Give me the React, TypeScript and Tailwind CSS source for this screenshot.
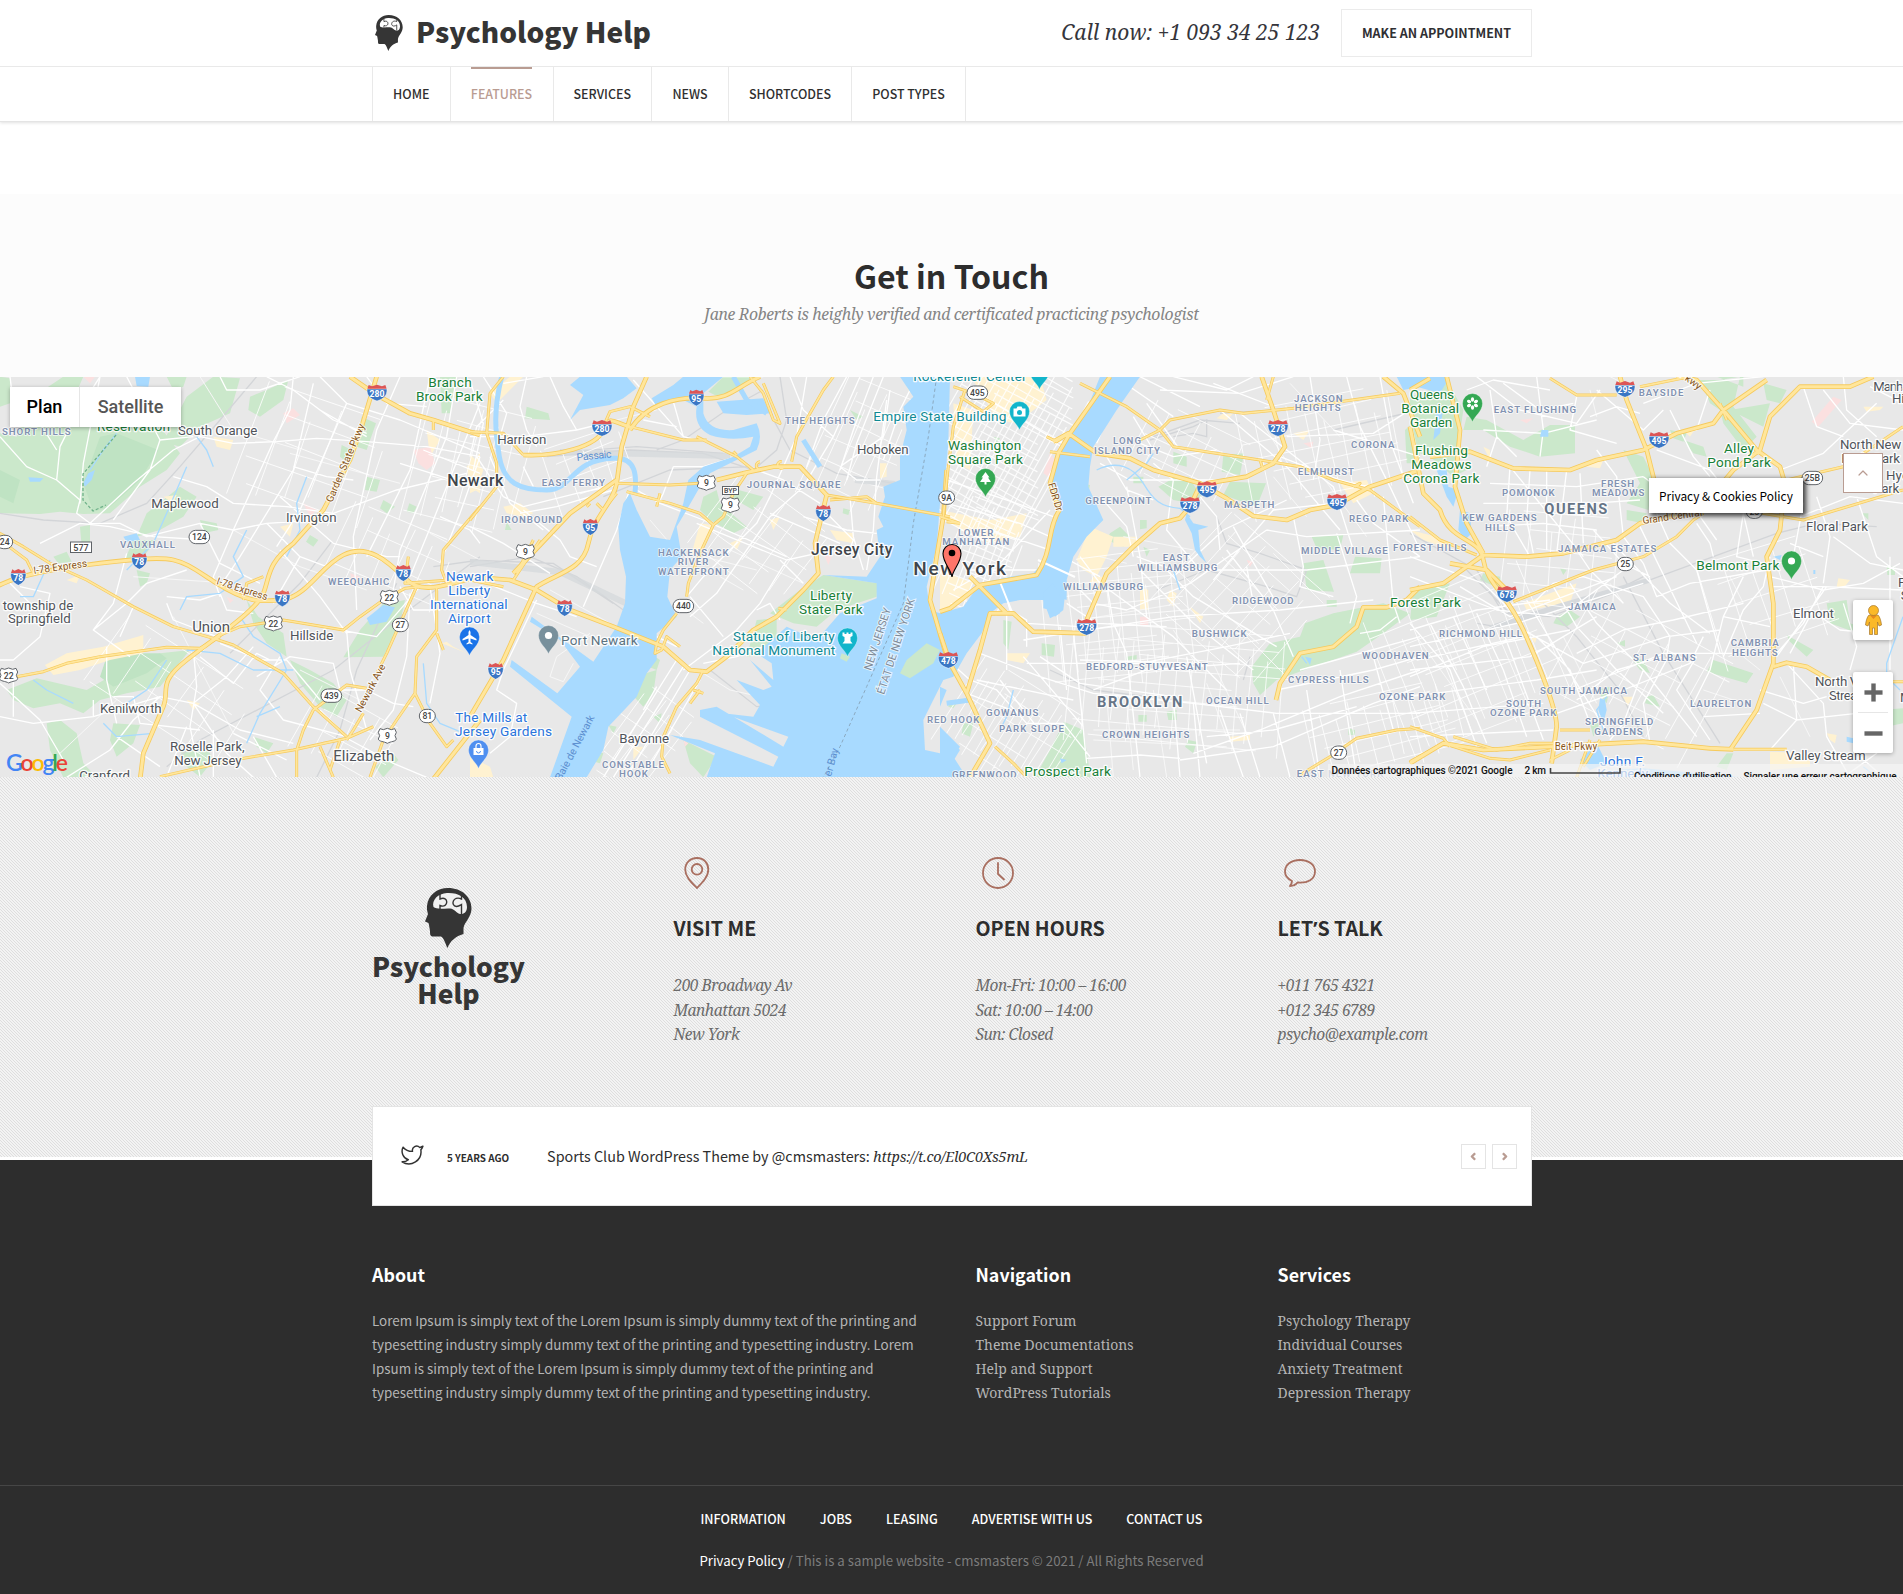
import React from "react";
import { ChevronLeft, ChevronRight, ChevronUp, Minus, Plus, Twitter } from "lucide-react";

const SANS = "font-['Noto_Sans_CJK_SC',sans-serif]";
const SERIF = "font-['Noto_Serif',serif]";

function Head({ className, brain }: { className: string; brain: string }) {
  return (
    <svg viewBox="0 0 47 60" preserveAspectRatio="none" className={className}>
      <path
        fill="#353535"
        d="M23 0C37 0 46.5 9 46.5 20.5C46.5 29 39.5 34 38.5 40V46C31 48 25 53 22.5 60C20 55 19 50 16 48.5H7C5 48 5 46 5 43L4 37L3.500 35L0 33.500L3 26C2 23 1.800 20 2 18C3 7 12 0 23 0Z"
      />
      <path className={brain} d="M8.500 19C6.500 12 13 5.500 22 5C33 4.500 42 9 42 19C42 24 39 26.500 35 26C31 25 30 21 25 20.500C20 20 12 22 8.500 19Z" />
      <path fill="none" stroke="#353535" strokeWidth="1.400" d="M15 6V11C24 7 24 21 15 17.500V21M36.500 7.500V11C28 7 25 18 31.500 18.500C34 18.500 35 17.500 36.500 16.500V26" />
    </svg>
  );
}

/* ---------- Map data: four tiles, each in its own triple-scale space ---------- */

type Pt = [number, number];
type Label = [string, number, number, number];
type Tile = {
  x: number;
  park: string;
  deep?: string;
  urban: string;
  rose?: string;
  minor: string;
  thin?: string;
  rail?: string;
  water: string;
  stream?: string;
  mid: string;
  major: string;
  area: Label[];
  town: Label[];
  green?: Label[];
  teal?: Label[];
  blue?: Label[];
  inter: [string, number, number][];
  route: [string, number, number][];
  us?: [string, number, number][];
};

const TILES: Tile[] = [
  {
    x: 0,
    park: "M0 190L50 200L100 80L190 20H250L210 110L300 60L400 130L480 170L540 250L500 300L420 350L330 430L250 432L180 425L120 432L0 430ZM560 80L640 20L720 25L690 130L600 170L540 230L490 215ZM750 80L800 60L865 30L850 90L780 140L745 120ZM0 20L30 25L30 100L0 110ZM500 20H560L550 50L520 60ZM20 960L110 925L260 960L380 890L480 850L570 840L480 950L380 970L300 990L250 1030L180 1000L100 1015L40 990ZM140 1060L180 1050L230 1090L250 1180L290 1222H190L150 1140ZM340 1060L420 1065L400 1120L350 1160L330 1110ZM1170 700L1215 690L1200 760L1150 860L1030 862L1080 780L1150 700ZM740 690L775 740L850 790L860 860L800 820L760 760ZM870 870L930 900L1000 940L1040 990L1010 1040L960 1010L900 940ZM1100 320L1140 330L1130 365L1095 360ZM1150 390L1185 410L1160 430L1140 415ZM1228 400L1250 410L1240 430L1220 425ZM1085 140L1128 160L1100 240L1070 230ZM440 430L540 350L590 380L550 440L480 480L410 500ZM600 450L650 460L655 480L610 490ZM930 495L955 510L940 530L918 515ZM1025 225L1055 240L1040 275L1020 260ZM410 600L450 610L440 640L420 650ZM540 1140L620 1130L640 1170L600 1220L560 1190ZM760 1100L820 1120L800 1150L770 1130ZM1320 20L1370 20L1350 130L1325 130ZM240 470L270 465L270 530L245 530ZM400 510L470 510L430 560L370 580ZM160 560L200 545L215 575L175 580ZM1125 1190L1180 1150L1195 1170L1150 1222Z",
    deep: "M250 340L300 200L350 190L475 240L420 330L330 410L280 425ZM320 860L420 850L480 850L500 865L440 910L340 950L300 920ZM0 300L60 330L40 400L0 380Z",
    urban: "M135 885L200 850L310 830L430 795V850L330 870L240 900L160 915ZM200 630L240 615L230 640ZM840 470L880 460L870 500ZM1400 290L1440 250V370L1410 350ZM1280 180L1320 210L1290 260ZM640 200L700 210L690 240L650 230ZM490 380L530 375L520 400ZM1000 770L1040 770L1030 790ZM560 990L600 1000L580 1020ZM1400 850L1325 820L1340 815L1360 830Z",
    rose: "M850 130L880 115L900 135L860 160ZM1240 240L1290 230L1305 280L1280 300L1255 280ZM250 20H285L270 40ZM910 400L950 420L930 440ZM1050 610L1080 620L1060 640ZM680 680L700 690L690 700Z",
    minor:
      "M30 20L40 100L120 160L170 240M0 200L80 290L170 330L180 230L230 130L300 20M170 330L240 390L230 430L270 460L360 460L440 500L600 460L700 480L800 460L960 450M300 20L250 280L240 400M120 520L240 460L330 470L460 500L620 510M270 460L400 340L520 240L600 200L700 220L830 215L950 205L1100 215L1280 230L1440 260M380 20L480 210L580 200M480 210L450 300L340 450M520 320L620 350L700 400L860 410L1000 430L1190 360L1400 310M660 20L680 60L780 60L900 20M880 20L870 120L820 215L700 480L640 620L660 680M800 20L880 60L1000 150L1100 190M960 20L1040 100L1200 150L1440 250M940 40L880 300L720 560L660 650M1040 100L900 420L830 530M1200 20L1130 180L1060 500L1070 720M1290 20L1230 300L1100 560M1370 20L1340 200L1200 540L1180 660M1440 100L1300 450L1230 620M1440 260L1380 430L1320 580M880 290L980 320L1060 330M800 460L900 560L980 590M840 380L1000 520L1160 560L1200 560M600 460L660 580L780 640M1320 440L1410 480L1440 520M0 490L90 540M60 650L150 670L120 800L40 870L0 870M30 640L90 700M380 550L340 700L280 780L390 860M400 710L360 800M320 830V930L350 1060M280 780L380 700L440 640L560 600M500 680L600 690L660 670L680 720L760 730M500 700L520 750L650 800L600 850M580 840L590 950L570 1070L600 1220M600 860L700 940L770 850L810 870M770 920L870 860L1000 880L1020 960L1100 960L1180 1000L1240 1010M660 820L780 870L860 870L960 990M0 1040L100 1060L280 1040L480 980L580 1000L720 1080L880 1120M580 1000L680 920L760 830M480 980L400 1050L330 1140L200 1222M580 1000L680 1150L760 1222M340 980H400L420 1060L600 1080M280 990V1040M350 1100L480 1190M560 1070L500 1220M640 1080V1222M960 1020L1050 1110L1180 1180L1280 1222M1040 780L1050 900L1100 1080M840 860L780 960L850 1050L1040 1100M1200 650L1240 720H1320M1230 670L1220 860L1180 1020L1110 1110M1260 650L1130 800L1020 780M1290 650L1320 850L1290 1000M760 1100L830 1222M700 1090L860 1170M40 920V1040M0 940L120 1050L190 1170M1270 240L1440 310M840 540L960 680L1040 790M900 560L820 700M1100 20L1160 100L1280 110M960 120L1100 200M1200 280L1420 350",
    thin: "M600 20L700 180L900 240M700 480L900 590L1100 660M400 620L700 640M520 740L700 1090M180 1150L350 990M870 250L1200 340M1290 490L1440 570M900 900L1100 1000",
    rail: "M770 20L660 150L540 290L440 400L300 460L130 450L0 430M1440 560L1200 740L1000 900L600 1110L500 1190M1300 590L1440 570M1190 640L1070 900L1020 1080L950 1222M995 515L900 640L690 850",
    water: "M1100 745L1150 705L1185 712L1160 755L1110 765ZM85 322L130 325L120 335L90 335ZM405 20H450L445 50L410 48ZM370 500L410 490L420 510L380 515ZM265 310L285 300L275 330L255 350L250 340Z",
    stream: "M560 290L500 430L460 520L380 600M920 320L890 400L900 480L860 560M740 480L700 560L730 620L660 670L560 680L540 720M350 190L310 240L270 300M460 1090L350 1100L310 1060M100 930L140 960L220 1000M720 740L760 800L840 850L860 900M860 900L780 1030L740 1120M560 840L660 850L760 900L880 900M150 570L100 680L60 680M500 870L440 960L380 1000M640 290L620 240L590 200M1270 880L1280 1000L1320 1060L1380 1085M840 1010L770 1040",
    mid: "M-10 485L70 530L150 580L260 630L400 710L520 770L640 805L700 825L850 910L940 1010L1040 1100M50 920L130 905L200 880L300 860L500 832L600 835L660 800M650 800L720 770L850 750L1030 780L1080 740L1150 690L1215 655L1260 650M1250 650L1160 850L1130 910M1090 1030L1060 1080L1040 1110M480 1220L700 1170L880 1140L1040 1105L1120 1070M1100 955L1040 945L1000 975L940 1020L910 1080L890 1140L890 1222M790 620L740 640L730 690M0 510L80 570L100 610M1225 560L1215 640L1350 630M1440 410L1330 540L1325 600L1340 640M1310 650L1310 780L1250 860L1245 970L1190 1050L1150 1110L1110 1222M1245 970L1290 1060L1340 1130L1360 1110M1310 790L1330 840M960 1130L1000 1222M970 1120L1020 1110L990 1200M1300 150V180",
    major: "M-10 650C60 610 200 590 370 572S540 570 650 640S800 690 850 690C930 670 960 590 1030 555S1160 570 1215 625S1340 640 1440 620M1130 20L1085 170L1050 270L970 420L880 520C800 580 810 620 790 670S650 800 560 870S510 960 490 1010L430 1150L420 1230M1050 20L1130 75L1230 130L1300 150L1440 195M1440 1050L1290 1240",
    area: [["SHORT HILLS", 6, 212, 195], ["VAUXHALL", 360, 525, 533], ["WEEQUAHIC", 984, 1168, 644]],
    town: [["South Orange", 534, 772, 194], ["Maplewood", 454, 656, 413], ["Irvington", 858, 1010, 455], ["township de", 8, 220, 719], ["Springfield", 24, 212, 758], ["Hillside", 870, 1000, 809], ["Kenilworth", 300, 485, 1028], ["Roselle Park,", 510, 734, 1144], ["New Jersey", 523, 725, 1184], ["Cranford", 238, 390, 1230]],
    green: [["Branch", 1285, 1415, 51], ["Brook Park", 1248, 1448, 93], ["Reservation", 291, 510, 184]],
    blue: [["Newark", 1338, 1480, 633], ["Liberty", 1345, 1471, 675], ["International", 1290, 1523, 717], ["Airport", 1344, 1472, 759], ["The Mills at", 1366, 1582, 1056], ["Jersey Gardens", 1365, 1656, 1098]],
    inter: [["280", 1131, 68], ["78", 55, 621], ["78", 418, 573], ["78", 847, 685], ["78", 1210, 609]],
    route: [["24", 14, 516], ["124", 598, 501], ["27", 1201, 765], ["439", 994, 977], ["81", 1282, 1038]],
    us: [["22", 1168, 683], ["22", 820, 760], ["22", 26, 916], ["9", 1162, 1097]],
  },
  {
    x: 470,
    park: "M760 20H860L800 60L740 78L715 65ZM170 110L235 130L240 150L165 145ZM770 350L880 380L850 420L780 380ZM700 380L740 360L750 400L830 470L790 490L720 450L690 420ZM1060 615L1222 640L1220 680L1100 720L1040 770L970 760L900 730L990 660ZM860 750L920 745L920 850L830 860ZM510 915L560 900L550 970L520 1010L482 970ZM540 850L570 870L560 900L535 890ZM1290 910L1370 820L1410 840L1390 880L1320 925ZM370 1140L400 1150L390 1180L355 1170ZM415 1065L440 1070L430 1090ZM640 1110L740 1160L700 1222L660 1180ZM550 1040L575 1030L570 1060ZM110 455L125 480L105 480ZM1120 415L1140 420L1135 435L1118 430ZM1140 120L1180 140L1160 150Z",
    urban: "M80 100L160 20H120L60 70ZM690 460L725 465L690 560L665 550ZM0 250L40 300L20 360L0 370ZM100 410L150 400L190 430L160 440L110 430ZM1300 30L1330 20L1320 70ZM1230 280H1250V320L1230 325ZM1080 480L1150 490L1150 520L1100 510ZM780 520L820 500L800 540ZM0 1160L60 1190L70 1222H0ZM900 450L930 440L910 480ZM490 1130L520 1130L490 1170Z",
    rose: "M1060 550L1085 560L1075 585ZM640 1110L655 1120L645 1130Z",
    minor: "M100 40L220 20M170 20L150 110L170 180L200 230M100 90L20 170L0 260M240 20L280 110L320 180M0 200L160 200L320 180L400 160M0 30L40 160L10 300M20 260L100 380L160 410L320 370L440 345M60 260L120 400L220 480M150 430L260 410L430 360M0 470L100 520L240 610M160 420L270 510L300 560L380 590M475 370L440 480L340 710M490 30L640 200L680 210M600 60L640 200M520 150L620 170M500 360L570 400L700 450L950 560M610 290H700L800 260M610 290L580 370L560 410M1010 20L980 200L900 380L860 460L700 620L650 680M1130 20L1060 150L1010 290M1170 20L1090 200L1000 350L900 440L760 640L740 670L660 740M1210 20L1150 180L1110 300M1240 20L1160 220L1130 330M860 300L940 330L1050 400M900 430L1040 490L1110 520M680 460L850 530L950 570L1040 550M1110 290L1160 330H1230M1250 90L1220 320L1210 480L1190 600M1140 380L1150 500L1180 600M1000 440L1130 480L1220 490M1060 420L1150 510L1130 560M660 680L760 800M950 570L870 700L800 780L640 900M930 570L1000 640M860 720L900 700L930 750M660 900L470 1222M640 890L430 1222M620 870L400 1222M690 930L520 1222M560 950L520 1020M200 690L100 900L80 960L140 1000L120 1100L60 1150M560 800L620 830M700 880L800 860L880 830M0 620L200 700L320 740M160 290L190 350M40 20L110 130L90 200M960 20L1000 120L1090 200M720 20L880 20M1260 60L1240 200L1110 290M1330 40L1290 120L1240 270",
    thin: "M540 450L600 520M780 540L1000 640M700 560L860 600M750 620L820 660M240 660L420 760M200 730L360 800M360 790L260 860L240 920L280 935L310 880M700 910L780 960L870 980M620 700L700 760M1150 330L1300 370L1440 370M400 160L560 120",
    rail: "M930 20L950 150L920 240L850 300L700 250L480 240L230 260M900 130L960 240L1100 310L1270 340M880 60L770 120L640 210L560 240M0 590L180 560L320 620L460 720L560 770M0 570L250 580L430 700M840 290L600 300L400 380M720 900L860 1010L950 1000M230 250L500 230L760 250",
    water: "M330 20H470L500 55L460 85L420 105L330 120L300 150L340 75L300 45ZM545 85L610 45L640 20H760L700 70L700 130Q715 185 790 180L860 160Q880 200 860 240L780 280L720 310L690 350L650 420L620 470L635 560L600 600L592 680L620 740L560 790L560 870L530 910L500 980L415 1070L400 1140L350 1222H240L305 1040L120 890L125 870L262 970L330 890L270 810L180 755L185 740L370 875L440 770L465 700L468 620L450 540L445 470L460 400L480 370L500 420L540 500L600 510L640 400L655 330L700 290L790 260L840 230L850 200Q780 215 720 195Q670 170 680 110L640 90L560 110ZM740 95L880 85L900 130L830 135L760 130ZM1290 20H1440L1435 220L1425 330L1410 400L1400 530L1370 650L1380 720L1410 730L1480 710L1530 640L1620 620L1690 610L1725 570L1740 520L1765 430L1740 340L1760 250L1800 190L1850 120L1890 20H2010L1940 120L1870 230L1860 290L1855 350L1900 450L1850 500L1810 560L1790 630L1790 690L1760 680L1770 730L1740 745L1720 690L1650 690L1600 700L1560 730L1535 790L1490 850L1450 920L1420 930L1400 970L1360 1050L1365 1140L1410 1150L1440 1110L1470 1140L1420 1222H710L735 1150L600 1095L690 1110L910 1190L925 1160L690 1040L690 1020L740 1010L940 1130L955 1100L760 1030L850 1040L870 1005L800 930L880 960L905 950L840 870L910 930L905 880L860 850L950 770L1040 810L1110 730L1220 685V640L1060 615L1190 620L1230 560L1220 480L1240 470L1225 440L1245 380L1240 350L1290 330V260L1310 180L1300 110L1330 80ZM1370 1050L1440 1090",
    stream: "M95 20C70 120 75 180 88 260S150 360 230 360S300 270 430 265C500 260 500 320 495 370M1000 210L1050 290M790 20L830 90L890 130M1430 1000L1500 990",
    mid: "M100 20L60 70L50 190L80 280V350L0 450M0 185L100 190L160 255M440 340L600 345L690 340M560 410L570 370M470 365L600 400L690 430L730 465M1090 20L1060 60L980 200L965 275M840 20L880 70L910 150L930 160L880 40M830 310L790 370L760 440L730 465L690 550L655 640L650 680M620 730L580 780L560 820L555 850L575 840L590 800L630 830M710 210L640 210L480 170L420 150M400 170L420 125L480 110L540 140M680 200L800 260L850 300M700 900L680 940L620 1010L580 1100L575 1160L600 1210M690 960L660 1000M700 970L670 960M1070 375L1220 400L1440 440M1080 390L1190 380L1220 400M190 510L140 610M210 510L130 630M350 410L360 400M380 400L400 420L440 370M0 630L100 650M870 275A12 12 0 1 0 880 295M935 275A10 10 0 1 0 940 292M925 715L950 720M790 245L800 255",
    major: "M530 20L490 110L455 230L440 340C430 400 370 440 355 520S260 610 200 650L100 870L0 1040M160 255C260 260 380 230 400 180S430 160 480 170M440 330L300 430L130 610M480 180C530 100 620 80 700 85S800 50 870 20M0 620L120 630L200 660L300 720L430 770L580 830L660 900L710 905L770 860L850 780L920 740L1000 660L1045 610L1035 520L1070 375L990 290L910 290L820 310L740 330M1430 300L1420 440L1400 560L1380 690L1395 740L1430 860",
    area: [["THE HEIGHTS", 945, 1154, 161], ["JOURNAL SQUARE", 830, 1111, 353], ["EAST FERRY", 215, 405, 347], ["IRONBOUND", 93, 277, 458], ["HACKENSACK", 564, 776, 557], ["RIVER", 623, 715, 585], ["WATERFRONT", 564, 776, 614], ["CONSTABLE", 396, 582, 1193], ["HOOK", 447, 534, 1220]],
    town: [["Harrison", 82, 229, 221], ["Hoboken", 1161, 1316, 251], ["Bayonne", 448, 597, 1118]],
    green: [["Liberty", 1020, 1146, 690], ["State Park", 987, 1178, 732]],
    teal: [["Rockefeller Center", 1330, 1670, 32], ["Empire State Building", 1210, 1609, 153], ["Statue of Liberty", 789, 1094, 813], ["National Monument", 727, 1096, 855]],
    inter: [["95", 679, 83], ["280", 396, 174], ["95", 361, 471], ["78", 1060, 429], ["78", 284, 714], ["95", 77, 903]],
    route: [["440", 640, 708]],
    us: [["9", 709, 338], ["9", 781, 405], ["9", 166, 545]],
  },
  {
    x: 940,
    park: "M372 1055L430 1080L452 1222H285L330 1140ZM655 350L700 325L745 320L785 380L750 400L700 390ZM850 255L912 250L900 315L845 305ZM870 335L978 340L950 410L850 375ZM935 890L990 820L1080 800L1095 760L1180 730L1330 700L1410 730L1330 790L1250 845L1120 890L1010 930L960 975L940 940ZM1090 580L1150 570L1182 665L1100 660ZM1245 560L1325 565L1320 610L1230 610ZM1115 500L1210 495L1200 540L1130 535ZM510 490L540 470L570 500L550 530L500 510ZM700 245L740 260L740 290L700 280ZM600 450L620 450V475L600 478ZM305 820L345 825L342 860L305 855ZM190 750L215 755L205 840L190 820ZM1395 180L1440 140V280L1400 280ZM745 1110L770 1115L760 1150L735 1130ZM595 1035H620V1055H595ZM680 1025L710 1020V1050H685ZM30 990L50 1000L40 1015L25 1010ZM70 1060L100 1060L90 1100L65 1090ZM580 320L610 320V340H580ZM420 340L450 345L445 370ZM1225 1075L1245 1080V1095H1225ZM160 200L180 205L170 220ZM1160 690L1190 690V710H1160ZM610 530L630 540L620 560ZM560 860L590 855V868L560 870Z",
    urban: "M90 20H300L320 90L230 160L170 150L120 60ZM40 100L100 120L90 300L50 280ZM0 420L150 450L260 430L240 500L150 520L60 480ZM0 600L100 640L60 700L0 720ZM450 470L520 500L500 560L470 620L430 600L410 570ZM520 500H590V530H520ZM600 650L625 660V720H600ZM750 710L790 740L780 760ZM200 850L270 850L250 880L200 870ZM850 130H880L860 150L830 145ZM1060 190L1110 180L1090 210ZM1200 340L1280 330L1300 370L1240 400ZM690 660L710 670L700 710L680 690ZM460 620L490 620L480 640L450 635ZM870 1100L930 1095V1110L870 1115Z",
    rose: "M330 250L345 270L340 330L310 310ZM600 740L625 740V765H600ZM1090 220L1120 215L1115 235ZM920 570L940 575L930 590Z",
    minor: "M130 80L330 200L420 250M150 480L330 540L480 620M90 600L330 600M40 660L180 580L330 420M190 650L210 720L260 750V830M200 720V900M260 760L420 770M250 810L700 740L1020 720L1300 690M260 880L600 880L860 830L1050 790M120 850L300 920L460 970L760 1000L1010 1030L1440 1030M300 860L420 940L700 980M360 770L380 960M400 780L440 1180M500 640L520 760L560 850L600 1222M420 560L480 640L700 800L860 960M600 600L760 760L900 870L940 900M680 600L760 680L1010 830M400 640L460 700L560 720L750 640L980 480M590 560L700 600L950 600L1100 600L1440 560M560 350L600 560L620 740M480 380L560 470L580 560M380 700L470 760L680 770M420 870L780 880M460 960L620 900L900 880M740 860L800 1180M700 980L720 1222M760 1000L780 1222M840 1020L910 1222M900 1030L960 1222M1000 1030L1050 1222M1100 960L1140 1222M1200 900L1250 1222M1300 860L1360 1080M760 1150L960 1080L1200 980L1440 900M720 1170L1000 1130L1300 1000L1440 950M1080 900L1440 800M1010 960L1300 900L1440 860M440 1165L600 1155L720 1165M800 1100L1000 1080L1250 1010M640 280L700 330L680 480L780 600L950 600M820 40L1000 110M560 20L500 150L470 220M540 30L700 140M600 20L780 110M660 60L900 70L1060 20M700 20L860 60L940 20M840 120L1040 290L1200 480M900 130L1180 350L1240 540M1040 200L1300 190L1440 100M1020 260L1200 330L1280 350M1110 20L1140 210L1120 330M1220 20L1260 170L1350 350L1440 540M1320 20L1360 240L1420 400M1180 180L1440 260M1060 440L1090 590L1080 650L1180 680M980 480L1100 500L1440 480M880 470L930 560L1010 700M860 540L1000 720L1060 860M820 630L1000 420L1180 400M700 620L850 480L1040 390M920 590L940 700M1250 390L1300 460L1440 560M1190 490L1250 680L1230 760M1330 380L1360 700L1380 760M780 380L830 440L840 540M500 260L560 360L640 390M480 280L570 330L840 330M600 220L700 260L830 240M580 140L640 240M620 100L720 240M1260 790L1320 780L1370 740M0 850L90 930L170 960L260 1060L370 1060L450 1160M110 930L400 990M80 970L240 1030M20 400L240 460L330 500M20 330L230 400L340 440M180 930L290 1070M250 860L430 1070",
    thin: "M550 500L760 540M480 560L560 580M700 780L780 900M1000 550L1150 700M900 780L1050 930M640 960L680 1222M560 1000L580 1200M500 980L520 1222M460 1080L900 1080M460 1110L860 1130M820 880L920 1090M1050 40L1200 200M960 150L1050 290M1140 310L1280 500M1000 320L1100 440M420 750L720 700M440 840L700 820M800 940L860 1100",
    rail: "M330 900L460 960L700 990M630 210L760 170L800 150L800 200L760 190L700 200M640 200L780 150L900 160M830 440L860 520L960 550L1100 600L1070 680L980 650L800 600L650 660M0 870L30 830M840 130L1000 120M1180 180L1440 120M930 860L910 930",
    water: "M480 440L470 460L440 450V440ZM310 670L340 640L360 680L380 630L370 720L345 740L330 720L310 715ZM740 430L760 460L805 470L775 480L780 540L800 580L780 560L765 540L755 490L735 450ZM1370 20H1440V50L1390 60ZM0 950L20 960L0 1010ZM0 1070L60 1130L40 1160L80 1222H0ZM1095 860L1115 865L1110 885ZM360 1165L380 1170L365 1180Z",
    stream: "M470 300C530 270 580 290 610 340S660 410 720 415L750 440M560 330L620 280L640 250M700 600L720 660M220 960L200 1040L180 1080M1085 860L1100 880",
    mid: "M420 40L560 110L660 180L700 230L960 270L1080 290L1180 330L1290 360L1440 470M600 210L660 180L690 150L840 120L910 130L1060 115L1380 70M100 70L160 100L130 125L60 80M320 200L350 215L380 195M330 245L450 260M960 270L970 300M1080 1215L1170 1160L1250 1105L1370 1080L1440 1075M165 1130L220 1180L260 1222M20 455L60 460M0 440L60 460M980 90L1000 20M1250 350L1260 340L1240 350M40 50L100 70M75 60L40 170L20 330L10 440",
    major: "M0 725L30 715L120 645L290 615C340 540 320 480 358 420L330 340L355 250L390 190L510 20M340 215L385 190L470 250L570 265L640 300L780 340L860 385L940 438L1040 450L1110 420L1190 405L1290 350L1440 300M800 340L920 320L1000 280L1035 230L1000 120L965 20M780 345L750 410L720 445L660 460L580 530L500 610L440 750M440 790L280 785L220 730H150L120 840L80 970L150 1120L90 1222M0 790L30 880L80 970M90 620L200 730M1440 650L1400 690L1340 712H1270L1250 770L1180 830L1080 850L1020 940L1008 990M1330 20L1390 70L1440 200",
    area: [["LOWER", 54, 160, 497], ["MANHATTAN", 7, 208, 525], ["LONG", 519, 603, 222], ["ISLAND CITY", 462, 660, 251], ["JACKSON", 1062, 1208, 95], ["HEIGHTS", 1064, 1202, 122], ["CORONA", 1233, 1363, 234], ["ELMHURST", 1073, 1242, 314], ["GREENPOINT", 436, 634, 401], ["MASPETH", 852, 1003, 413], ["REGO PARK", 1227, 1405, 456], ["MIDDLE VILLAGE", 1083, 1343, 551], ["EAST", 668, 748, 572], ["WILLIAMSBURG", 592, 832, 602], ["WILLIAMSBURG", 370, 609, 659], ["RIDGEWOOD", 876, 1061, 701], ["BUSHWICK", 755, 920, 800], ["BEDFORD-STUYVESANT", 438, 803, 899], ["CYPRESS HILLS", 1044, 1286, 939], ["WOODHAVEN", 1266, 1466, 867], ["OZONE PARK", 1317, 1516, 990], ["OCEAN HILL", 798, 986, 1001], ["CROWN HEIGHTS", 486, 748, 1103], ["GOWANUS", 138, 295, 1037], ["PARK SLOPE", 177, 372, 1086], ["RED HOOK", -39, 118, 1059], ["GREENWOOD", 36, 230, 1225], ["EAST NEW YORK", 1070, 1330, 1222], ["FOREST HILLS", 1359, 1579, 543]],
    town: [],
    green: [["Washington", 24, 244, 239], ["Square Park", 24, 249, 281], ["Prospect Park", 253, 513, 1218], ["Forest Park", 1350, 1563, 710]],
    inter: [["278", 1014, 174], ["495", 801, 358], ["278", 750, 405], ["495", 1191, 396], ["278", 440, 771], ["478", 25, 870]],
    route: [["495", 112, 68], ["9A", 20, 383], ["27", 1196, 1148]],
  },
  {
    x: 1410,
    park: "M0 80L60 60L110 30L160 120L150 190L140 260L170 300L130 320L60 260L0 240ZM170 140L230 150L340 210L420 165H495V250L390 260L300 230L220 180L160 180ZM640 240L700 260L730 320L715 420L650 400L690 340ZM650 420L710 430L700 460L650 450ZM870 30H930L990 20L970 110L1040 200L1000 240L940 160L930 120L900 100ZM960 120L1080 100L1060 170L1000 140ZM820 210L880 230L890 260L850 250ZM910 870L1030 910L1010 940L890 905ZM1250 700L1310 690L1320 760L1410 790L1400 810L1260 760ZM220 610L270 620L280 660L210 630ZM10 660L70 650L120 640L80 740L0 750ZM660 860L700 870L720 910L690 900ZM730 975L750 1010L705 1000L710 980ZM620 820L645 810V830ZM440 740L480 720L510 740L470 770L430 760ZM1130 795L1210 840L1190 860L1140 815ZM950 1150L970 1150L950 1200L920 1190ZM1410 1020L1479 1015V1060L1430 1070ZM920 20L1000 50V20ZM540 1060L570 1060L550 1100ZM560 960L600 950L590 1000ZM450 595L470 600L460 615ZM780 180L830 190L820 215L790 205ZM1430 590H1455V615H1432ZM1060 40L1130 60L1110 100L1070 90ZM1355 430L1375 430V450Z",
    urban: "M540 280L580 270L570 295L530 290ZM820 180L860 170L840 200ZM1360 110H1420L1410 120L1370 125ZM340 700L500 640L480 700L350 720ZM0 480L80 500L130 540L40 510ZM1285 625L1320 630L1300 655L1280 650ZM635 980L670 980L650 1010ZM1250 1090L1280 1095L1275 1120L1260 1110ZM1080 1145L1200 1150V1190L1080 1200ZM220 230L240 240V270ZM360 800L380 805L375 820Z",
    rose: "M1270 80L1295 90L1225 170L1205 155ZM330 150L370 145L350 160ZM240 190L250 200Z",
    minor: "M200 20L330 120L500 160L570 60M240 60L260 200L320 260M170 60L250 30L420 60M280 40L390 120L490 100M380 20L400 180L390 260M500 80L480 180L620 220M540 140L620 110L690 130M560 60L700 180L760 120M220 180L400 190L560 150M260 200L230 290M300 290L290 440L360 560M360 300L350 450L370 550M410 300V540M470 300L440 550M510 310L520 520M240 340L500 350L700 320M220 400L540 400L690 390M230 470L400 460L560 480M560 240L620 320L640 500M730 200L860 180L900 60M740 240L900 300L940 350M780 120L850 260L900 320M700 100L860 40L1060 20M640 500L700 580L740 680L840 640L1070 600M860 460L900 520L910 560M870 440L920 510M1000 430L1030 560M1080 560L1060 650L1000 720L940 860M740 430L780 520L860 600L930 850M690 470L860 820M600 510L780 700L900 790M550 480L640 580L720 620M500 540L540 600L640 700M300 290L520 560M480 640L560 760L700 900L860 1100M430 650L500 770L620 900L760 1030M350 690L500 940L600 1100M370 700L430 640L520 620L700 680L780 800L770 860M0 560L220 640L300 720M0 620L260 720L450 740L640 600M150 650L300 740L620 620M0 780L200 720L420 690M0 830L320 760L700 640M20 870L340 800M0 900L360 860L560 740M0 760L120 900L200 1130M60 760L160 950L230 1120M130 740L230 960M200 730L280 900L350 1100M270 760L400 1110M0 920L220 830L480 780M0 980L380 930L560 900M0 1030L400 1000M0 1100L430 1080M380 800L480 900L540 1060M340 780L520 880L770 800L930 780M500 850L640 780L790 750L1000 700M490 960L640 900L760 850L980 850M440 1030L640 960L840 880L880 800M700 900L640 1060L600 1110M780 850L700 1000L720 1120M860 860L800 960L900 1110M500 990L620 900L760 860M840 1020L900 900L940 740L1080 770M940 740L1000 620M880 1040L1050 1030M1090 650L1240 650L1479 660M1080 620L1240 660L1360 640L1470 580M1240 650L1180 760L1100 850M1240 640L1260 500L1220 380M1140 520L1240 560M1270 500L1380 580L1479 600M1210 720L1140 850M1100 860L1200 720L1250 650M1130 880L1240 1000L1250 1100L1320 1222M1050 960L1180 1000L1250 980M1060 1000L1160 1050L1340 1030M1150 880L1160 1050L1080 1140M1200 720L1290 780L1400 790M1180 50L1220 170L1300 200M1240 60L1320 160L1479 180M1300 20L1310 120L1400 200M1380 50L1479 100M1110 300L1240 250L1400 100M1170 440L1320 380L1479 400M1340 380L1400 560L1479 620M1300 700L1340 830L1320 900M1340 1150L1420 1222M1400 960V1150L1300 1222M1440 560V900M1000 430L980 560L1060 580M1110 360L1180 400L1150 560M740 350L700 320",
    thin: "M600 20L640 40M540 60L560 140M20 800L200 1050M90 780L140 900M460 800L560 1000M600 640L640 700M960 620L1000 700M1000 860L1050 900M880 960L1000 1000M1110 920L1200 1100",
    rail: "M0 490L200 600L280 730L420 740L720 630L1100 490L1220 460L1400 470M300 760L560 690L700 620M170 600L310 740M640 620L760 850L930 1120M400 700L500 800L620 950L700 1100M200 760L260 770L330 750",
    water: "M0 20H120L90 70L20 50ZM80 300L110 300L115 350L145 360L130 410L110 380ZM150 420L180 430L185 490L165 510L145 480ZM395 180L415 180V200H390ZM570 985L585 990L590 1020L580 1060L565 1020ZM80 120L100 110L90 190L70 210ZM1310 1100L1330 1105V1120L1310 1115ZM1090 560L1115 555L1110 570ZM1210 600L1216 600V612H1210ZM510 1170L560 1120L590 1180L540 1200ZM700 1195L1000 1222H600V1200Z",
    stream: "M590 980L560 1020L580 1080M1479 740L1430 880L1430 920L1470 960M1360 1190L1400 1222M1330 1110L1350 1150",
    mid: "M420 25L500 75H620M690 50L830 22M310 695L550 600L700 560L800 500L850 450L880 430M1000 420L1180 450L1479 360M1130 330L1300 290L1479 170M0 440L90 510L200 555M0 1070L100 1105L120 1130M0 1175L100 1120L240 1165L300 1170L420 1140M1440 935H1479M450 1080L540 1080M540 1110L500 1222M130 1100L260 1140L360 1120H440M420 1170L480 1140M520 1190L570 1110M970 1138L1130 1138M930 100L950 150",
    major: "M0 170L40 370L90 420C120 520 210 500 220 570S290 670 340 780S440 1020 440 1070L425 1180M110 20L150 180L135 350L170 460L220 550M60 260L180 245L310 295L480 300L560 270L700 240L800 190L910 160L940 120L1070 30M630 20L650 90L710 240L735 340M0 660L100 640L220 555L350 560L460 550L620 510L690 460L870 420L970 300L1050 240L1080 140L1170 50L1320 50L1390 20M800 20L860 30L940 120L1040 240L1110 290L1125 340L1110 480L1070 560L1090 700L1090 880L1040 1020L960 1140M120 580L230 600L290 660M0 1180L100 1120L220 1140L420 1130L700 1115L900 1135L970 1138M1090 890L1130 878L1190 890L1260 930M0 60L60 25",
    area: [["BAYSIDE", 686, 820, 77], ["EAST FLUSHING", 251, 498, 128], ["FRESH", 573, 672, 350], ["MEADOWS", 546, 703, 379], ["POMONOK", 276, 434, 377], ["KEW GARDENS", 157, 380, 452], ["HILLS", 225, 315, 482], ["JAMAICA ESTATES", 444, 739, 545], ["JAMAICA", 474, 617, 719], ["RICHMOND HILL", 87, 336, 800], ["ST. ALBANS", 669, 857, 872], ["CAMBRIA", 962, 1106, 828], ["HEIGHTS", 966, 1103, 857], ["LAURELTON", 840, 1024, 1010], ["SOUTH JAMAICA", 390, 651, 971], ["SOUTH", 288, 393, 1010], ["OZONE PARK", 240, 439, 1037], ["SPRINGFIELD", 525, 730, 1064], ["GARDENS", 553, 698, 1094]],
    town: [["Floral Park", 1188, 1374, 484], ["Elmont", 1149, 1272, 745], ["North Valley", 1215, 1420, 949], ["Stream", 1257, 1375, 989], ["Valley Stream", 1128, 1367, 1169], ["Manhasset", 1390, 1560, 62], ["Hills", 1446, 1520, 100], ["North New", 1290, 1474, 238], ["Hyde Park", 1294, 1470, 278], ["Hyde", 1428, 1520, 331], ["Park", 1390, 1468, 370], ["Franklin", 1464, 1580, 652], ["Square", 1472, 1580, 691], ["M", 1470, 1500, 997]],
    green: [["Queens", 0, 132, 87], ["Botanical", -26, 147, 129], ["Garden", 0, 127, 171], ["Flushing", 15, 174, 255], ["Meadows", 4, 185, 297], ["Corona Park", -20, 208, 339], ["Alley", 942, 1032, 249], ["Pond Park", 892, 1083, 291], ["Belmont Park", 859, 1108, 600]],
    blue: [["John F.", 570, 705, 1187], ["Kennedy", 562, 715, 1225]],
    inter: [["295", 645, 57], ["495", 747, 210], ["678", 291, 672]],
    route: [["25B", 1207, 324], ["25", 646, 582], ["25", 1033, 425]],
  },
];

/** Street meshes: centre, width, height, rotation and the two street spacings. */
const MESH: [number, number, number, number, number, number, number][] = [
  [1000, 450, 130, 190, 29, 7, 8],
  [985, 560, 70, 110, 22, 8, 9],
  [1120, 620, 150, 130, -6, 13, 12],
  [1180, 690, 220, 120, 5, 15, 14],
  [1010, 730, 120, 100, 32, 8, 22],
  [1240, 600, 130, 120, 42, 16, 20],
  [1330, 450, 170, 110, -12, 17, 16],
  [1190, 460, 110, 80, 26, 16, 18],
  [1470, 660, 170, 150, -22, 15, 18],
  [1560, 560, 110, 90, 6, 22, 18],
  [1640, 680, 160, 120, 28, 22, 22],
  [1770, 600, 120, 110, -18, 26, 24],
  [1390, 730, 160, 80, -14, 15, 14],
  [860, 450, 80, 130, 24, 14, 22],
  [760, 540, 110, 90, 36, 18, 22],
  [470, 470, 110, 130, 14, 18, 20],
  [590, 470, 80, 70, -20, 20, 18],
  [390, 560, 110, 80, 24, 22, 22],
  [640, 740, 70, 100, 36, 11, 20],
  [310, 460, 130, 120, 20, 26, 26],
  [170, 690, 150, 80, 34, 30, 26],
  [350, 740, 100, 70, 28, 22, 20],
];

function meshPath(w: number, h: number, sx: number, sy: number): string {
  let d = "";
  let k = 0;
  for (let x = -w / 2; x <= w / 2; x += sx) {
    const cut = ((k * 37) % 11) * h * 0.025;
    d += `M${x} ${-h / 2 + cut}L${x + ((k % 3) - 1) * 2} ${h / 2 - (((k * 23) % 7) * h) / 30}`;
    k++;
  }
  for (let y = -h / 2; y <= h / 2; y += sy) {
    const cut = ((k * 29) % 13) * w * 0.025;
    d += `M${-w / 2 + cut} ${y}L${w / 2 - (((k * 17) % 9) * w) / 30} ${y + ((k % 3) - 1) * 2}`;
    k++;
  }
  return d;
}

const at = (x: number) => `translate(${x} 370) scale(.33333)`;

function Labels({ items, size, color, weight, caps }: { items?: Label[]; size: number; color: string; weight: number; caps?: boolean }) {
  return (
    <>
      {(items ?? []).map(([t, x0, x1, y], i) => (
        <text key={i} x={x0} y={y} textLength={x1 - x0} fontSize={size} fontWeight={weight} fill={color} stroke="#fff" strokeWidth={caps ? 5 : 8} strokeOpacity={caps ? 0.75 : 0.9} strokeLinejoin="round" paintOrder="stroke">
          {t}
        </text>
      ))}
    </>
  );
}

function Pin({ x, y, fill, children }: { x: number; y: number; fill: string; children?: React.ReactNode }) {
  return (
    <g transform={`translate(${x} ${y})`}>
      <path d="M0 18.500C-1.500 13-10 8-10 0A10 10 0 0 1 10 0C10 8 1.500 13 0 18.500Z" fill={fill} stroke="#fff" strokeOpacity=".5" strokeWidth=".6" />
      {children}
    </g>
  );
}

function CityMap() {
  return (
    <svg viewBox="0 377 1903 400" className="block h-full w-full font-['Roboto',sans-serif]">
      <rect x="0" y="377" width="1903" height="400" fill="#e8e8e8" />
      {TILES.map((t) => (
        <g key={t.x} transform={at(t.x)}>
          <path d={t.park} fill="#cbe8cb" />
          {t.deep && <path d={t.deep} fill="#bfe3c3" />}
          <path d={t.urban} fill="#fff2d1" />
          {t.rose && <path d={t.rose} fill="#fbe0e0" />}
          {t.rail && <path d={t.rail} fill="none" stroke="#d3d5d8" strokeWidth="4" />}
          {t.thin && <path d={t.thin} fill="none" stroke="#f7f7f7" strokeWidth="3" />}
        </g>
      ))}
      <g fill="none" stroke="#d6d9dc">
        <path d="M470 562L560 572L640 610M560 452L730 456M855 480L895 484" strokeWidth="6" opacity=".8" />
        <path d="M1490 628L1560 606L1650 580" strokeWidth="5" />
      </g>
      {MESH.map(([cx, cy, w, h, r, sx, sy], i) => (
        <path key={i} transform={`translate(${cx} ${cy}) rotate(${r})`} d={meshPath(w, h, sx, sy)} fill="none" stroke="#fff" strokeWidth={i < 2 ? 1.2 : 0.9} opacity=".85" />
      ))}
      {TILES.map((t) => (
        <path key={t.x} transform={at(t.x)} d={t.minor} fill="none" stroke="#fff" strokeWidth="4" strokeLinejoin="round" />
      ))}
      {TILES.map((t) => (
        <g key={t.x} transform={at(t.x)}>
          <path d={t.water} fill="#a8daff" />
          {t.stream && <path d={t.stream} fill="none" stroke="#a8daff" strokeWidth={t.x === 470 ? 15 : 4} strokeLinejoin="round" />}
        </g>
      ))}
      <g transform={at(470)}>
        <path d="M1290 910L1310 870L1370 820L1410 840L1390 880L1320 925Z" fill="#cbe8cb" />
        <path d="M1115 850L1140 860L1130 875L1110 865Z" fill="#cbe8cb" />
        <path d="M1400 20L1375 200L1330 460L1300 700L1190 950L1110 1130L1060 1222" fill="none" stroke="#8ba9c0" strokeWidth="3" strokeDasharray="10 8" />
      </g>
      <path d="M118 435L85 474V500L95 511L108 505" transform="translate(-2 0)" fill="none" stroke="#6fb28a" strokeWidth="1.300" strokeDasharray="3 2" />
      <path d="M1038 560L1075 577M1000 582L1012 612" stroke="#fff" strokeWidth="2" />
      {TILES.map((t) => (
        <g key={t.x} transform={at(t.x)} fill="none" strokeLinejoin="round">
          <path d={t.mid} stroke="#f6ca5c" strokeWidth="9" />
          <path d={t.major} stroke="#f6ca5c" strokeWidth="14" />
          <path d={t.mid} stroke="#ffe69c" strokeWidth="5" />
          <path d={t.major} stroke="#ffe69c" strokeWidth="9" />
        </g>
      ))}
      {TILES.map((t) => (
        <g key={t.x} transform={at(t.x)}>
          <Labels items={t.area} size={29} color="#8292b1" weight={600} caps />
          <Labels items={t.town} size={40} color="#50545a" weight={400} />
          <Labels items={t.green} size={41} color="#188038" weight={400} />
          <Labels items={t.teal} size={41} color="#0f8a94" weight={400} />
          <Labels items={t.blue} size={41} color="#2a74dc" weight={400} />
        </g>
      ))}
      <g transform={at(0)}>
        <Labels items={[["Newark", 1342, 1510, 349]]} size={48} color="#40454b" weight={500} />
        <Labels items={[["Union", 577, 690, 787], ["Elizabeth", 1000, 1183, 1174]]} size={45} color="#50545a" weight={400} />
      </g>
      <g transform={at(470)}>
        <Labels items={[["Jersey City", 1023, 1267, 556]]} size={47} color="#40454b" weight={500} />
        <Labels items={[["New York", 1330, 1608, 616]]} size={57} color="#40454b" weight={500} />
        <Labels items={[["Port Newark", 273, 503, 825]]} size={41} color="#5c7381" weight={400} />
      </g>
      <g transform={at(940)}>
        <Labels items={[["BROOKLYN", 471, 727, 1011]]} size={44} color="#667587" weight={700} />
      </g>
      <g transform={at(1410)}>
        <Labels items={[["QUEENS", 403, 592, 432]]} size={44} color="#667587" weight={700} />
        <Labels items={[["Belt Pkwy", 434, 562, 1141]]} size={30} color="#87561c" weight={400} />
      </g>
      <g fontSize="10.200" fill="#87561c" stroke="#fff" strokeWidth="2" strokeOpacity=".8" paintOrder="stroke">
        <text transform="translate(332 503) rotate(-67)" textLength="84">Garden State Pkwy</text>
        <text transform="translate(34 574) rotate(-8)" textLength="54">I-78 Express</text>
        <text transform="translate(216 584) rotate(18)" textLength="53">I-78 Express</text>
        <text transform="translate(361 713) rotate(-62)" textLength="53">Newark Ave</text>
        <text transform="translate(1048 484) rotate(73)" textLength="29">FDR Dr</text>
        <text transform="translate(1643 524) rotate(-8)" textLength="60">Grand Central</text>
        <text transform="translate(1679 376) rotate(36)">Pkwy</text>
      </g>
      <g fontSize="10.500" fill="#5c8fd0">
        <text transform="translate(577 461) rotate(-6)" textLength="35">Passaic</text>
        <text transform="translate(561 781) rotate(-62)" textLength="72">Baie de Newark</text>
        <text transform="translate(831 777) rotate(-75)">er Bay</text>
      </g>
      <g fontSize="11" fill="#7f8b99" stroke="#fff" strokeWidth="2" strokeOpacity=".7" paintOrder="stroke">
        <text transform="translate(871 671) rotate(-72)" textLength="65">NEW JERSEY</text>
        <text transform="translate(884 695) rotate(-72)" textLength="100">ÉTAT DE NEW YORK</text>
      </g>
      {TILES.map((t) => (
        <g key={t.x} transform={at(t.x)} textAnchor="middle" fontSize="26">
          {t.inter.map(([n, x, y], i) => {
            const w = n.length > 2 ? 30 : 23;
            return (
              <g key={i} transform={`translate(${x} ${y})`}>
                <path d={`M${-w} -11H${w}C${w + 1} 8 ${w - 8} 18 0 25C${8 - w} 18 ${-w - 1} 8 ${-w} -11Z`} fill="#3a76c4" stroke="#fff" strokeWidth="1.500" />
                <path d={`M${-w + 1} -12L${-w + 5} -23L${-w / 2} -19L0 -24L${w / 2} -19L${w - 5} -23L${w - 1} -12Z`} fill="#dc5656" />
                <text y="12" fill="#fff" fontWeight="700">{n}</text>
              </g>
            );
          })}
          {t.route.map(([n, x, y], i) => {
            const w = n.length > 2 ? 31 : 24;
            return (
              <g key={i} transform={`translate(${x} ${y})`}>
                <rect x={-w} y="-20" width={w * 2} height="40" rx="20" fill="#fff" stroke="#5f6368" strokeWidth="3" />
                <text y="9" fill="#444" fontWeight="500">{n}</text>
              </g>
            );
          })}
          {(t.us ?? []).map(([n, x, y], i) => (
            <g key={i} transform={`translate(${x} ${y})`}>
              <path d="M-22 -21L-12 -18L0 -22L12 -18L22 -21L27 -10L23 0L27 10C26 18 10 17 0 23C-10 17-26 18-27 10L-23 0L-27 -10Z" fill="#fff" stroke="#5f6368" strokeWidth="3" />
              <text y="10" fill="#444" fontWeight="500">{n}</text>
            </g>
          ))}
        </g>
      ))}
      <g textAnchor="middle" fill="#444" fontWeight="500">
        <rect x="70.500" y="542" width="21" height="10.500" fill="#fff" stroke="#5f6368" />
        <text x="81" y="550.500" fontSize="9">577</text>
        <rect x="722.500" y="486.500" width="16" height="8" fill="#fff" stroke="#5f6368" />
        <text x="730.500" y="493.200" fontSize="7">BYP</text>
      </g>
      <Pin x={1039.500} y={371} fill="#12b5cb" />
      <Pin x={1019.500} y={411.500} fill="#12b5cb">
        <path d="M-6-3H-3L-2-5H2L3-3H6V5H-6Z" fill="#fff" />
        <circle cy="1" r="2.500" fill="#12b5cb" />
      </Pin>
      <Pin x={985.500} y={478.500} fill="#34a853">
        <path d="M0-6.500L4-1H2.500L5.500 3.500H1V6H-1V3.500H-5.500L-2.500-1H-4Z" fill="#fff" />
      </Pin>
      <Pin x={1472.500} y={403.500} fill="#34a853">
        <g fill="#fff">
          {[0, 60, 120, 180, 240, 300].map((a) => (
            <ellipse key={a} cy="-4" rx="1.600" ry="2.200" transform={`rotate(${a})`} />
          ))}
        </g>
      </Pin>
      <Pin x={1791.500} y={561} fill="#34a853">
        <circle r="3.600" fill="#fff" />
      </Pin>
      <Pin x={469.500} y={637} fill="#1a73e8">
        <path d="M0-7L1-5V-2L7 2V3.500L1 1.500V5L3 6.500V7.500L0 6.500L-3 7.500V6.500L-1 5V1.500L-7 3.500V2L-1-2V-5Z" fill="#fff" />
      </Pin>
      <Pin x={548.500} y={635.500} fill="#78909c">
        <circle r="3.600" fill="#fff" />
      </Pin>
      <Pin x={847.500} y={638} fill="#12b5cb">
        <path d="M-5-5.500H-3V-4H-1V-5.500H1V-4H3V-5.500H5V-2L3-1V3L5 5.500H-5L-3 3V-1L-5-2Z" fill="#fff" />
      </Pin>
      <Pin x={478.500} y={750} fill="#4f8ff0">
        <path d="M-5-2H5V5H-5Z" fill="#fff" />
        <path d="M-2.500-1V-4A2.500 2.500 0 0 1 2.500-4V-1" fill="none" stroke="#fff" strokeWidth="1.200" />
        <path d="M-2 1A2 2 0 0 0 2 1" fill="none" stroke="#4f8ff0" />
      </Pin>
      <path d="M952 577C951 569 943 563 943 553.500A9 9 0 0 1 961 553.500C961 563 953 569 952 577Z" fill="#fe7569" stroke="#000" strokeWidth="1.100" />
      <circle cx="952" cy="553" r="3.300" />
      <text x="6" y="771" textLength="62" fontSize="23" fontFamily="Lato" fontWeight="600" fill="#4285f4">
        G<tspan fill="#ea4335">o</tspan><tspan fill="#fbbc05">o</tspan><tspan>g</tspan><tspan fill="#34a853">l</tspan><tspan fill="#ea4335">e</tspan>
      </text>
      <path d="M1328 764H1903V777H1328Z" fill="#f5f5f5" opacity=".7" />
      <g fontSize="10" fontWeight="500" fill="#111">
        <text x="1331.500" y="774" textLength="181">Données cartographiques ©2021 Google</text>
        <text x="1524.500" y="774" textLength="21.500">2 km</text>
        <text x="1634" y="780" textLength="97.500">Conditions d'utilisation</text>
        <text x="1743.500" y="780" textLength="153">Signaler une erreur cartographique</text>
      </g>
      <path d="M1550.500 768V773H1620V768" fill="none" stroke="#444" strokeWidth="1.600" />
    </svg>
  );
}

const NAV: [string, string][] = [
  ["HOME", "w-[77.5px]"],
  ["FEATURES", "w-[103px]"],
  ["SERVICES", "w-[98.5px]"],
  ["NEWS", "w-[77px]"],
  ["SHORTCODES", "w-[123px]"],
  ["POST TYPES", "w-[115px]"],
];

function Header() {
  return (
    <header className="h-[122px] border-b border-[#e4e4e4] bg-white pl-px shadow-[0_1px_3px_rgba(0,0,0,0.12)]">
      <div className="-ml-px h-[67px] border-b border-[#e9e9e9] pl-px">
        <div className="mx-auto flex h-full w-[1160px] items-center">
          <Head className="ml-[3px] h-9 w-7" brain="fill-white" />
          <div className="-mt-[5px] ml-[13px] text-[28px] leading-9 font-black text-[#353535]">Psychology Help</div>
          <div className={`-mt-0.5 ml-auto text-[20.95px] leading-8 text-[#35353b] italic ${SERIF}`}>Call now: +1 093 34 25 123</div>
          <button className="ml-[21px] h-12 w-[191px] border border-[#ebebeb] text-[12.5px] font-bold text-[#2f2f33]">MAKE AN APPOINTMENT</button>
        </div>
      </div>
      <nav className="mx-auto flex h-[54px] w-[1160px]">
        {NAV.map(([t, w], i) => (
          <a key={t} className={`flex justify-center border-l border-[#e9e9e9] text-[12.45px] leading-[54px] font-medium ${w} ${i === 1 ? "text-[#b99c92]" : "text-[#2f2f2f]"} ${i === 5 ? "border-r" : ""}`}>
            <span className={i === 1 ? "border-t-2 border-[#b99c92] leading-[50px]" : ""}>{t}</span>
          </a>
        ))}
      </nav>
    </header>
  );
}

function MapSection() {
  return (
    <section className="relative h-[400px] overflow-hidden">
      <CityMap />
      <div className="absolute top-2.5 left-2.5 flex h-10 font-['Roboto',sans-serif] text-lg leading-10 font-medium shadow-[0_1px_4px_rgba(0,0,0,0.3)]">
        <div className="w-[70px] border-r border-[#e6e6e6] bg-white text-center text-black">Plan</div>
        <div className="w-[101px] bg-white text-center text-[#565656]">Satellite</div>
      </div>
      <div className="absolute top-[101px] left-[1649px] h-[35px] w-[154px] bg-white text-center text-[11.9px] leading-[35px] text-black shadow-[2px_2px_5px_1px_rgba(0,0,0,0.75)]">Privacy &amp; Cookies Policy</div>
      <button className="absolute top-[76px] left-[1843px] flex size-10 items-center justify-center border border-[#b99c92] bg-white text-[#b99c92]">
        <ChevronUp size={16} strokeWidth={1.8} />
      </button>
      <div className="absolute top-[223px] left-[1853px] flex size-10 items-center justify-center rounded-xs bg-white shadow-[0_1px_4px_rgba(0,0,0,0.3)]">
        <svg viewBox="0 0 17 30" className="h-[30px] w-[17px]" fill="#fbb928" stroke="#a5762b" strokeWidth=".7">
          <path d="M4 10H13C15 12 16 16 16.500 20L14 21L12.500 17V29.500H9.500V23H7.500V29.500H4.500V17L3 21L.5 20C1 16 2 12 4 10Z" />
          <path d="M5 10.500H12L8.500 14Z" fill="#e98a1c" stroke="none" />
          <circle cx="8.500" cy="5.500" r="5" />
        </svg>
      </div>
      <div className="absolute top-[295px] left-[1853px] flex h-[81px] w-10 flex-col items-center rounded-xs bg-white text-[#666] shadow-[0_1px_4px_rgba(0,0,0,0.3)]">
        <div className="flex h-10 items-center"><Plus size={31} strokeWidth={3.4} strokeLinecap="butt" /></div>
        <div className="h-px w-[30px] bg-[#e6e6e6]" />
        <div className="flex h-10 items-center"><Minus size={31} strokeWidth={3.4} strokeLinecap="butt" /></div>
      </div>
    </section>
  );
}

const INFO = [
  {
    title: <>VISIT ME</>,
    lines: ["200 Broadway Av", "Manhattan 5024", "New York"],
    icon: <path d="M23 1C16 1 11.200 6 11.200 12.500C11.200 20 18 26 23 31C28 26 34.300 20 34.300 12.500C34.300 6 30 1 23 1ZM23 7A5.300 5.300 0 1 0 23 17.600A5.300 5.300 0 0 0 23 7Z" />,
  },
  {
    title: <>OPEN HOURS</>,
    lines: ["Mon-Fri: 10:00 – 16:00", "Sat: 10:00 – 14:00", "Sun: Closed"],
    icon: <path d="M22 1A15 15 0 1 0 22 31A15 15 0 0 0 22 1ZM22 6V17L28 22.500" />,
  },
  {
    title: (
      <>
        LET<span className="font-['Noto_Sans',sans-serif]">’</span>S TALK
      </>
    ),
    lines: ["+011 765 4321", "+012 345 6789", "psycho@example.com"],
    icon: <path d="M22 3C13 3 7 8 7 14.500C7 19 10 22 14 24C14 26.500 13 28 12 29C15 29 18 27.500 19.500 25.500C30 26.500 37 22 37 14.500C37 8 31 3 22 3Z" />,
  },
];

function InfoSection() {
  return (
    <section className="h-[380px] bg-[linear-gradient(45deg,#dedede_8.33%,#f3f3f3_8.33%_41.67%,#dedede_41.67%_58.33%,#f3f3f3_58.33%_91.67%,#dedede_91.67%)] bg-[length:3px_3px] pl-px">
      <div className="mx-auto flex w-[1160px]">
        <div className="flex w-[301.5px] shrink-0 pt-[111px]">
          <div className="flex w-[153px] flex-col items-center text-[26.4px] leading-[27px] font-black text-[#353535]">
            <Head className="mb-1 h-[60px] w-[47px]" brain="fill-[#f1f1f1]" />
            <div>Psychology</div>
            <div>Help</div>
          </div>
        </div>
        {INFO.map((c, i) => (
          <div key={i} className="w-[302px] shrink-0 pt-20">
            <svg viewBox="0 0 46 32" className="h-8 w-[46px]" fill="none" stroke="#a96f60" strokeWidth="1.800" strokeLinejoin="round" strokeLinecap="round">
              {c.icon}
            </svg>
            <h3 className="mt-[25px] h-7 text-[19.6px] leading-7 font-bold text-[#2d2d2d]">{c.title}</h3>
            <div className={`mt-[31px] text-[15.5px] leading-[24.5px] tracking-[-0.48px] text-[#6b6b6b] italic ${SERIF}`}>
              {c.lines.map((l) => (
                <p key={l}>{l}</p>
              ))}
            </div>
          </div>
        ))}
      </div>
    </section>
  );
}

function Footer() {
  return (
    <footer className="flex h-[434px] flex-col items-center bg-[#2d2d2d]">
      <div className="relative -mt-[54px] ml-px flex h-[100px] w-[1160px] shrink-0 items-center border border-[#e4e4e4] bg-white">
        <Twitter size={25} strokeWidth={1.4} className="-mt-1 ml-[27px] text-[#333]" />
        <span className="mt-1 ml-[22px] text-[9.9px] font-bold text-[#2d2d2d]">5 YEARS AGO</span>
        <p className="ml-[38px] text-[14.35px] leading-6 text-[#2d2d2d]">
          Sports Club WordPress Theme by @cmsmasters: <span className={`text-[14.4px] tracking-[-0.2px] italic ${SERIF}`}>https://t.co/El0C0Xs5mL</span>
        </p>
        <div className="mr-3.5 ml-auto flex gap-1.5 text-[#b99c92]">
          <button className="flex size-[25px] items-center justify-center border border-[#e4e4e4]"><ChevronLeft size={13} strokeWidth={4.5} strokeLinecap="butt" /></button>
          <button className="flex size-[25px] items-center justify-center border border-[#e4e4e4]"><ChevronRight size={13} strokeWidth={4.5} strokeLinecap="butt" /></button>
        </div>
      </div>
      <div className="mt-14 ml-px flex w-[1160px] text-[13.41px] leading-6 text-[#b5b5b5]">
        <div className="w-[603.5px] shrink-0">
          <h4 className="mb-[22px] text-[17.85px] font-bold text-white">About</h4>
          <p>Lorem Ipsum is simply text of the Lorem Ipsum is simply dummy text of the printing and</p>
          <p>typesetting industry simply dummy text of the printing and typesetting industry. Lorem</p>
          <p>Ipsum is simply text of the Lorem Ipsum is simply dummy text of the printing and</p>
          <p>typesetting industry simply dummy text of the printing and typesetting industry.</p>
        </div>
        {[
          { h: "Navigation", l: ["Support Forum", "Theme Documentations", "Help and Support", "WordPress Tutorials"] },
          { h: "Services", l: ["Psychology Therapy", "Individual Courses", "Anxiety Treatment", "Depression Therapy"] },
        ].map((c) => (
          <div key={c.h} className="w-[302px] shrink-0">
            <h4 className="mb-[22px] text-[17.85px] font-bold text-white">{c.h}</h4>
            <ul className={`-mb-px pt-px text-[13.95px] ${SERIF}`}>
              {c.l.map((x) => (
                <li key={x}>{x}</li>
              ))}
            </ul>
          </div>
        ))}
      </div>
      <div className="mt-[81px] flex w-full flex-col items-center border-t border-[#464646] pt-[23px]">
        <div className="flex gap-[34px] text-[12.55px] leading-5 font-medium text-white">
          {["INFORMATION", "JOBS", "LEASING", "ADVERTISE WITH US", "CONTACT US"].map((x) => (
            <a key={x}>{x}</a>
          ))}
        </div>
        <p className="mt-[22px] text-[13.25px] leading-5 text-[#7c7c7c]">
          <span className="text-white">Privacy Policy</span> / This is a sample website - cmsmasters © 2021 / All Rights Reserved
        </p>
      </div>
    </footer>
  );
}

export default function App() {
  return (
    <div className={`w-full bg-white ${SANS}`}>
      <Header />
      <section className="mt-[72px] flex h-[183px] flex-col items-center bg-[#fcfcfc] pt-[61px]">
        <h1 className="text-[32.1px] leading-10 font-bold text-[#2d2d2d]">Get in Touch</h1>
        <p className={`mt-1 text-[15.8px] leading-[30px] tracking-[-0.34px] text-[#858585] italic ${SERIF}`}>Jane Roberts is heighly verified and certificated practicing psychologist</p>
      </section>
      <MapSection />
      <InfoSection />
      <div className="h-[3px] bg-white" />
      <Footer />
    </div>
  );
}
